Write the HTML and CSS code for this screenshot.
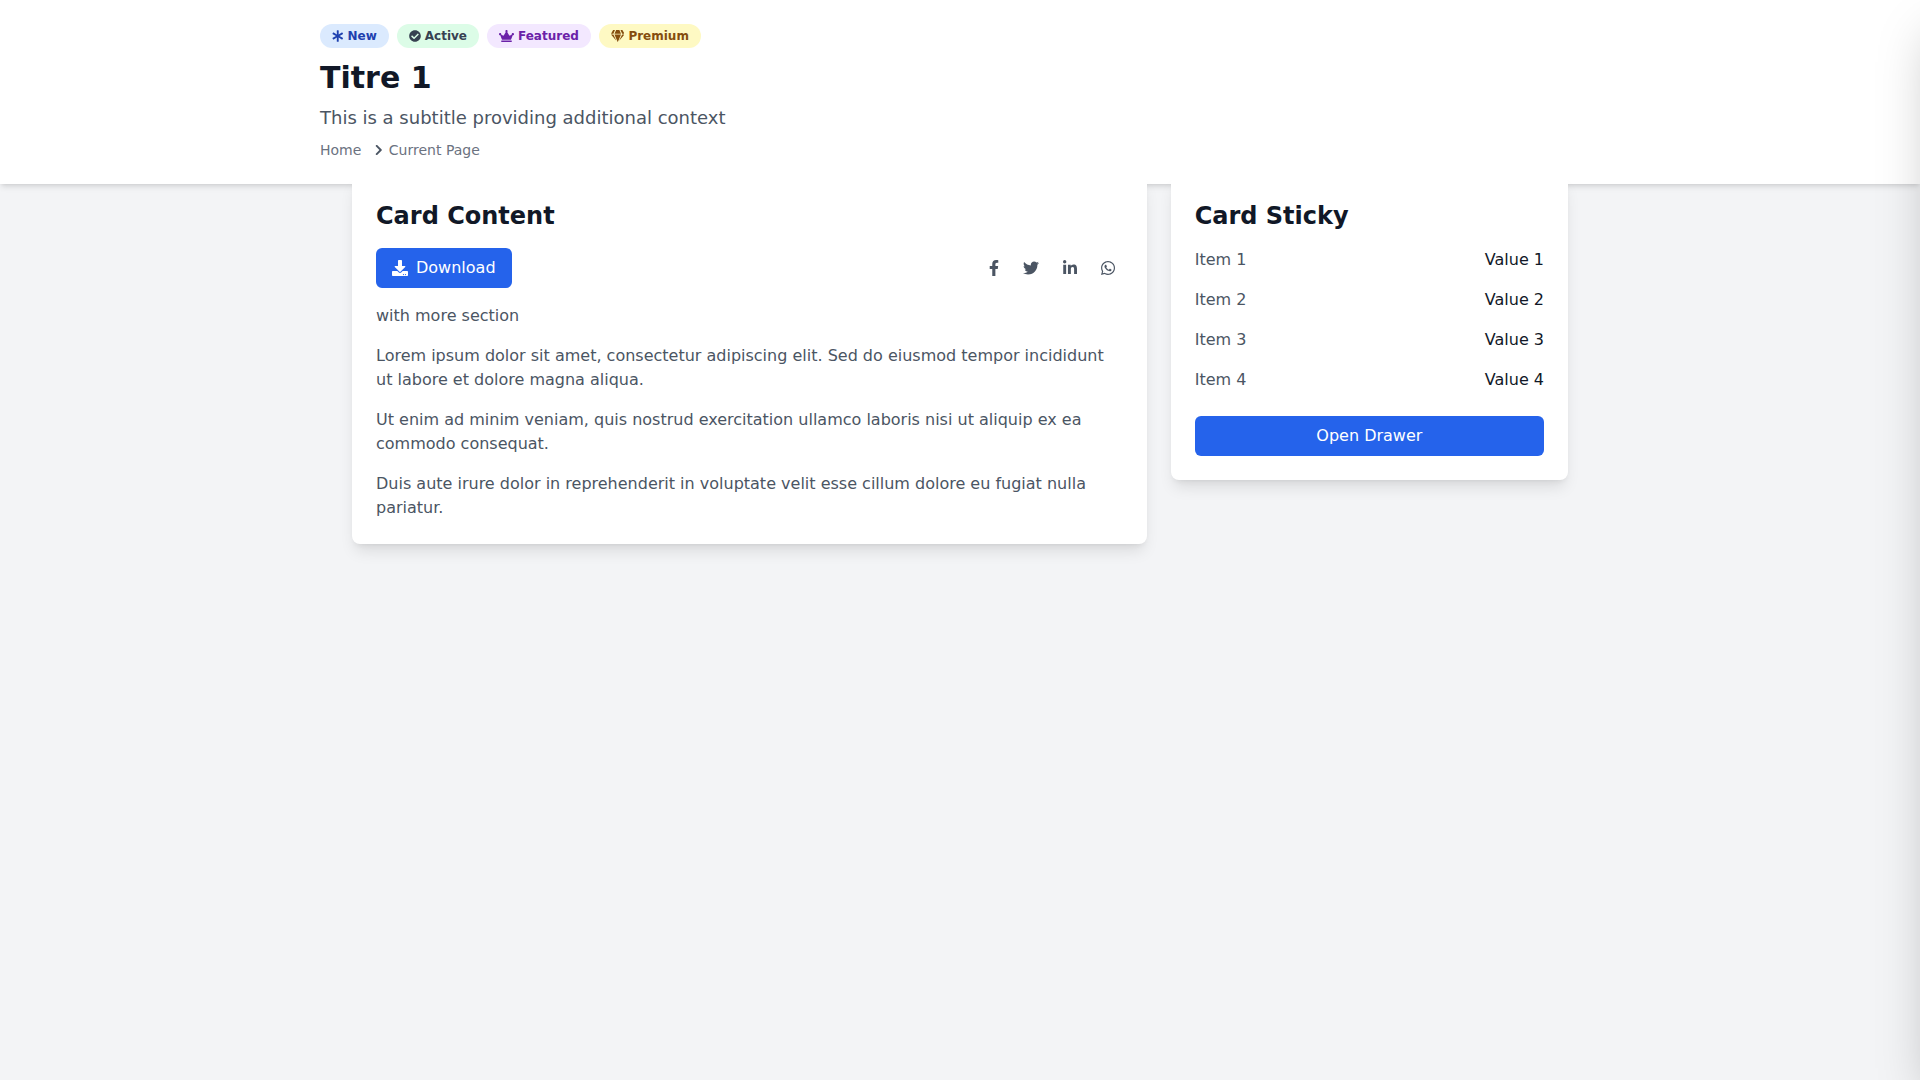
FILE: index.html
```html
<!DOCTYPE html>
<html lang="en">
  <head>
    <meta charset="UTF-8" />
    <meta name="viewport" content="width=device-width, initial-scale=1.0" />
    <title>Titre 1</title>
    <link rel="stylesheet" href="styles.css">
  </head>
  <body>
    <header class="page-header">
      <div class="badges">
        <span class="badge badge-new">
          <svg class="icon icon-asterisk" viewBox="0 0 512 512"><path d="M478.21 334.093L336 256l142.21-78.093c11.795-6.477 15.961-21.384 9.232-33.037l-19.48-33.741c-6.728-11.653-21.72-15.499-33.227-8.523L296 186.718l3.475-162.204C299.763 11.061 288.937 0 275.48 0h-38.96c-13.456 0-24.283 11.061-23.994 24.514L216 186.718 77.265 102.607c-11.506-6.976-26.499-3.13-33.227 8.523l-19.48 33.741c-6.728 11.653-2.562 26.56 9.233 33.037L176 256 33.79 334.093c-11.795 6.477-15.961 21.384-9.232 33.037l19.48 33.741c6.728 11.653 21.721 15.499 33.227 8.523L216 325.282l-3.475 162.204C212.237 500.939 223.064 512 236.52 512h38.961c13.456 0 24.283-11.061 23.995-24.514L296 325.282l138.735 84.111c11.506 6.976 26.499 3.13 33.227-8.523l19.48-33.741c6.728-11.653 2.563-26.559-9.232-33.036z"/></svg>
          New
        </span>
        <span class="badge badge-active">
          <svg class="icon" viewBox="0 0 512 512"><path d="M504 256c0 136.967-111.033 248-248 248S8 392.967 8 256 119.033 8 256 8s248 111.033 248 248zM227.314 387.314l184-184c6.248-6.248 6.248-16.379 0-22.627l-22.627-22.627c-6.248-6.249-16.379-6.249-22.628 0L216 308.118l-70.059-70.059c-6.248-6.248-16.379-6.248-22.628 0l-22.627 22.627c-6.248 6.248-6.248 16.379 0 22.627l104 104c6.249 6.249 16.379 6.249 22.628.001z"/></svg>
          Active
        </span>
        <span class="badge badge-featured">
          <svg class="icon icon-crown" viewBox="0 0 640 512"><path d="M528 448H112c-8.8 0-16 7.2-16 16v32c0 8.8 7.2 16 16 16h416c8.8 0 16-7.2 16-16v-32c0-8.8-7.2-16-16-16zm64-320c-26.5 0-48 21.5-48 48 0 7.1 1.6 13.7 4.4 19.8L476 239.2c-15.4 9.2-35.3 4-44.2-11.6L350.3 85C361 76.2 368 63 368 48c0-26.5-21.5-48-48-48s-48 21.5-48 48c0 15 7 28.2 17.7 37l-81.5 142.6c-8.9 15.6-28.9 20.8-44.2 11.6l-72.3-43.4c2.7-6 4.4-12.7 4.4-19.8 0-26.5-21.5-48-48-48S0 149.5 0 176s21.5 48 48 48c2.6 0 5.2-.4 7.7-.8L128 416h384l72.3-192.8c2.5.4 5.1.8 7.7.8 26.5 0 48-21.5 48-48s-21.5-48-48-48z"/></svg>
          Featured
        </span>
        <span class="badge badge-premium">
          <svg class="icon icon-gem" viewBox="0 0 576 512"><path d="M485.5 0L576 160H474.9L405.7 0h79.8zm-128 0l69.2 160H149.3L218.5 0h139zm-267 0h79.8l-69.2 160H0L90.5 0zM0 192h100.7l123 251.7c1.5 3.1-2.7 5.9-5 3.3L0 192zm148.2 0h279.6l-137 318.2c-1 2.4-4.5 2.4-5.5 0L148.2 192zm204.1 251.7l123-251.7H576L357.3 446.9c-2.3 2.7-6.5-.1-5-3.2z"/></svg>
          Premium
        </span>
      </div>
      <h1>Titre 1</h1>
      <p class="subtitle">This is a subtitle providing additional context</p>
      <nav class="breadcrumb">
        <a href="#">Home</a>
        <svg class="chevron" viewBox="0 0 320 512"><path d="M285.476 272.971L91.132 467.314c-9.373 9.373-24.569 9.373-33.941 0l-22.667-22.667c-9.357-9.357-9.375-24.522-.04-33.901L188.505 256 34.484 101.255c-9.335-9.379-9.317-24.544.04-33.901l22.667-22.667c9.373-9.373 24.569-9.373 33.941 0L285.475 239.03c9.373 9.372 9.373 24.568.001 33.941z"/></svg>
        <span>Current Page</span>
      </nav>
    </header>

    <main class="layout">
      <section class="card">
        <h2>Card Content</h2>
        <div class="actions">
          <button class="btn" type="button">
            <svg class="btn-icon" viewBox="0 0 512 512"><path d="M216 0h80c13.3 0 24 10.7 24 24v168h87.7c17.8 0 26.7 21.5 14.1 34.1L269.7 378.3c-7.5 7.5-19.8 7.5-27.3 0L90.1 226.1c-12.6-12.6-3.7-34.1 14.1-34.1H192V24c0-13.3 10.7-24 24-24zm296 376v112c0 13.3-10.7 24-24 24H24c-13.3 0-24-10.7-24-24V376c0-13.3 10.7-24 24-24h146.7l49 49c20.1 20.1 52.5 20.1 72.6 0l49-49H488c13.3 0 24 10.7 24 24zm-124 88c0-11-9-20-20-20s-20 9-20 20 9 20 20 20 20-9 20-20zm64 0c0-11-9-20-20-20s-20 9-20 20 9 20 20 20 20-9 20-20z"/></svg>
            Download
          </button>
          <div class="social">
            <a href="#"><svg class="social-fb" viewBox="0 0 320 512"><path d="M279.14 288l14.22-92.66h-88.91v-60.13c0-25.35 12.42-50.06 52.24-50.06h40.42V6.26S260.43 0 225.36 0c-73.22 0-121.08 44.38-121.08 124.72v70.62H22.89V288h81.39v224h100.17V288z"/></svg></a>
            <a href="#"><svg class="social-tw" viewBox="0 0 512 512"><path d="M459.37 151.716c.325 4.548.325 9.097.325 13.645 0 138.72-105.583 298.558-298.558 298.558-59.452 0-114.68-17.219-161.137-47.106 8.447.974 16.568 1.299 25.34 1.299 49.055 0 94.213-16.568 130.274-44.832-46.132-.975-84.792-31.188-98.112-72.772 6.498.974 12.995 1.624 19.818 1.624 9.421 0 18.843-1.3 27.614-3.573-48.081-9.747-84.143-51.98-84.143-102.985v-1.299c13.969 7.797 30.214 12.67 47.431 13.319-28.264-18.843-46.781-51.005-46.781-87.391 0-19.492 5.197-37.36 14.294-52.954 51.655 63.675 129.3 105.258 216.365 109.807-1.624-7.797-2.599-15.918-2.599-24.04 0-57.828 46.782-104.934 104.934-104.934 30.213 0 57.502 12.67 76.67 33.137 23.715-4.548 46.456-13.32 66.599-25.34-7.798 24.366-24.366 44.833-46.132 57.827 21.117-2.273 41.584-8.122 60.426-16.243-14.292 20.791-32.161 39.308-52.628 54.253z"/></svg></a>
            <a href="#"><svg class="social-in" viewBox="0 0 448 512"><path d="M100.28 448H7.4V148.9h92.88zM53.79 108.1C24.09 108.1 0 83.5 0 53.8a53.79 53.79 0 0 1 107.58 0c0 29.7-24.1 54.3-53.79 54.3zM447.9 448h-92.68V302.4c0-34.7-.7-79.2-48.29-79.2-48.29 0-55.69 37.7-55.69 76.7V448h-92.78V148.9h89.08v40.8h1.3c12.4-23.5 42.69-48.3 87.88-48.3 94 0 111.28 61.9 111.28 142.3V448z"/></svg></a>
            <a href="#"><svg class="social-in" viewBox="0 0 448 512"><path d="M380.9 97.1C339 55.1 283.2 32 223.9 32c-122.4 0-222 99.6-222 222 0 39.1 10.2 77.3 29.6 111L0 480l117.7-30.9c32.4 17.7 68.9 27 106.1 27h.1c122.3 0 224.1-99.6 224.1-222 0-59.3-25.2-115-67.1-157zm-157 341.6c-33.2 0-65.7-8.9-94-25.7l-6.7-4-69.8 18.3L72 359.2l-4.4-7c-18.5-29.4-28.2-63.3-28.2-98.2 0-101.7 82.8-184.5 184.6-184.5 49.3 0 95.6 19.2 130.4 54.1 34.8 34.9 56.2 81.2 56.1 130.5 0 101.8-84.9 184.6-186.6 184.6zm101.2-138.2c-5.5-2.8-32.8-16.2-37.9-18-5.1-1.9-8.8-2.8-12.5 2.8-3.7 5.6-14.3 18-17.6 21.8-3.2 3.7-6.5 4.2-12 1.4-32.6-16.3-54-29.1-75.5-66-5.7-9.8 5.7-9.1 16.3-30.3 1.8-3.7.9-6.9-.5-9.7-1.4-2.8-12.5-30.1-17.1-41.2-4.5-10.8-9.1-9.3-12.5-9.5-3.2-.2-6.9-.2-10.6-.2-3.7 0-9.7 1.4-14.8 6.9-5.1 5.6-19.4 19-19.4 46.3 0 27.3 19.9 53.7 22.6 57.4 2.8 3.7 39.1 59.7 94.8 83.8 35.2 15.2 49 16.5 66.6 13.9 10.7-1.6 32.8-13.4 37.4-26.4 4.6-13 4.6-24.1 3.2-26.4-1.3-2.5-5-3.9-10.5-6.6z"/></svg></a>
          </div>
        </div>
        <p>with more section</p>
        <p>Lorem ipsum dolor sit amet, consectetur adipiscing elit. Sed do eiusmod tempor incididunt ut labore et dolore magna aliqua.</p>
        <p>Ut enim ad minim veniam, quis nostrud exercitation ullamco laboris nisi ut aliquip ex ea commodo consequat.</p>
        <p>Duis aute irure dolor in reprehenderit in voluptate velit esse cillum dolore eu fugiat nulla pariatur.</p>
      </section>

      <aside class="card">
        <h2>Card Sticky</h2>
        <ul class="items">
          <li><span>Item 1</span><span class="value">Value 1</span></li>
          <li><span>Item 2</span><span class="value">Value 2</span></li>
          <li><span>Item 3</span><span class="value">Value 3</span></li>
          <li><span>Item 4</span><span class="value">Value 4</span></li>
        </ul>
        <button class="btn btn-block" type="button">Open Drawer</button>
      </aside>
    </main>

    <!-- closed drawer, parked just off the right edge -->
    <div class="drawer"></div>
  </body>
</html>
```

FILE: styles.css
```css
* {
  box-sizing: border-box;
}
html,
body {
  height: 100%;
}
body {
  font-family: "DejaVu Sans", sans-serif;
  font-size: 16px;
  line-height: 24px;
  background-color: #f3f4f6;
  color: #4b5563;
  margin: 0;
  overflow: hidden;
}
svg {
  display: block;
  fill: currentColor;
}
.page-header {
  position: relative;
  z-index: 1;
  background: #fff;
  padding: 24px 320px;
  box-shadow: 0 4px 6px -1px rgba(0, 0, 0, 0.1), 0 2px 4px -2px rgba(0, 0, 0, 0.1);
}
.badges {
  display: flex;
  gap: 8px;
  margin-bottom: 12px;
}
.badge {
  display: flex;
  align-items: center;
  gap: 4px;
  padding: 4px 12px;
  border-radius: 999px;
  font-size: 12px;
  line-height: 16px;
  font-weight: bold;
}
.icon {
  width: 12px;
  height: 12px;
}
.icon-asterisk {
  width: 11.5px;
}
.icon-crown {
  width: 15px;
}
.icon-gem {
  width: 13.5px;
}
.badge-new {
  background: #dbeafe;
  color: #1e40af;
}
.badge-active {
  background: #dcfce7;
  color: #374151;
}
.badge-featured {
  background: #f3e8ff;
  color: #6b21a8;
}
.badge-premium {
  background: #fef9c3;
  color: #854d0e;
}
h1 {
  margin: 0 0 8px;
  font-size: 30px;
  line-height: 36px;
  color: #111827;
}
.subtitle {
  margin: 0 0 8px;
  font-size: 18px;
  line-height: 28px;
}
.breadcrumb {
  display: flex;
  align-items: center;
  font-size: 14px;
  line-height: 20px;
  color: #6b7280;
}
.breadcrumb a {
  color: inherit;
  text-decoration: none;
}
.chevron {
  width: 7.5px;
  height: 12px;
  margin: 0 6.5px 0 13.5px;
  color: #4b5563;
}
.layout {
  position: relative;
  z-index: 2;
  display: grid;
  grid-template-columns: 2fr 1fr;
  gap: 24px;
  align-items: start;
  width: 1280px;
  margin: -8px auto 0;
  padding: 0 32px;
}
.card {
  background: #fff;
  padding: 24px;
  border-radius: 8px;
  box-shadow: 0 10px 15px -3px rgba(0, 0, 0, 0.1), 0 4px 6px -4px rgba(0, 0, 0, 0.1);
}
h2 {
  margin: 0 0 16px;
  font-size: 24px;
  line-height: 32px;
  color: #111827;
}
.actions {
  display: flex;
  justify-content: space-between;
  align-items: center;
  margin-bottom: 16px;
}
.btn {
  display: inline-flex;
  align-items: center;
  justify-content: center;
  gap: 8px;
  padding: 8px 16px;
  border: none;
  border-radius: 6px;
  background-color: #2563eb;
  color: #fff;
  font: inherit;
  cursor: pointer;
}
.btn-block {
  width: 100%;
  margin-top: 24px;
}
.btn-icon {
  width: 16px;
  height: 16px;
}
.social {
  display: flex;
  gap: 8px;
}
.social a {
  display: block;
  padding: 8px;
  color: #4b5563;
}
.social svg {
  height: 16px;
}
.social-fb {
  width: 10px;
}
.social-tw {
  width: 16px;
}
.social-in {
  width: 14px;
}
p {
  margin: 0 0 16px;
}
.card p:last-child {
  margin-bottom: 0;
}
.items {
  list-style: none;
  margin: 0;
  padding: 0;
  display: flex;
  flex-direction: column;
  gap: 16px;
}
.items li {
  display: flex;
  justify-content: space-between;
}
.value {
  color: #111827;
}
.drawer {
  position: fixed;
  z-index: 3;
  top: 0;
  left: 100%;
  width: 384px;
  height: 100%;
  background: #fff;
  box-shadow: 0 25px 50px -12px rgba(0, 0, 0, 0.25);
}
```
